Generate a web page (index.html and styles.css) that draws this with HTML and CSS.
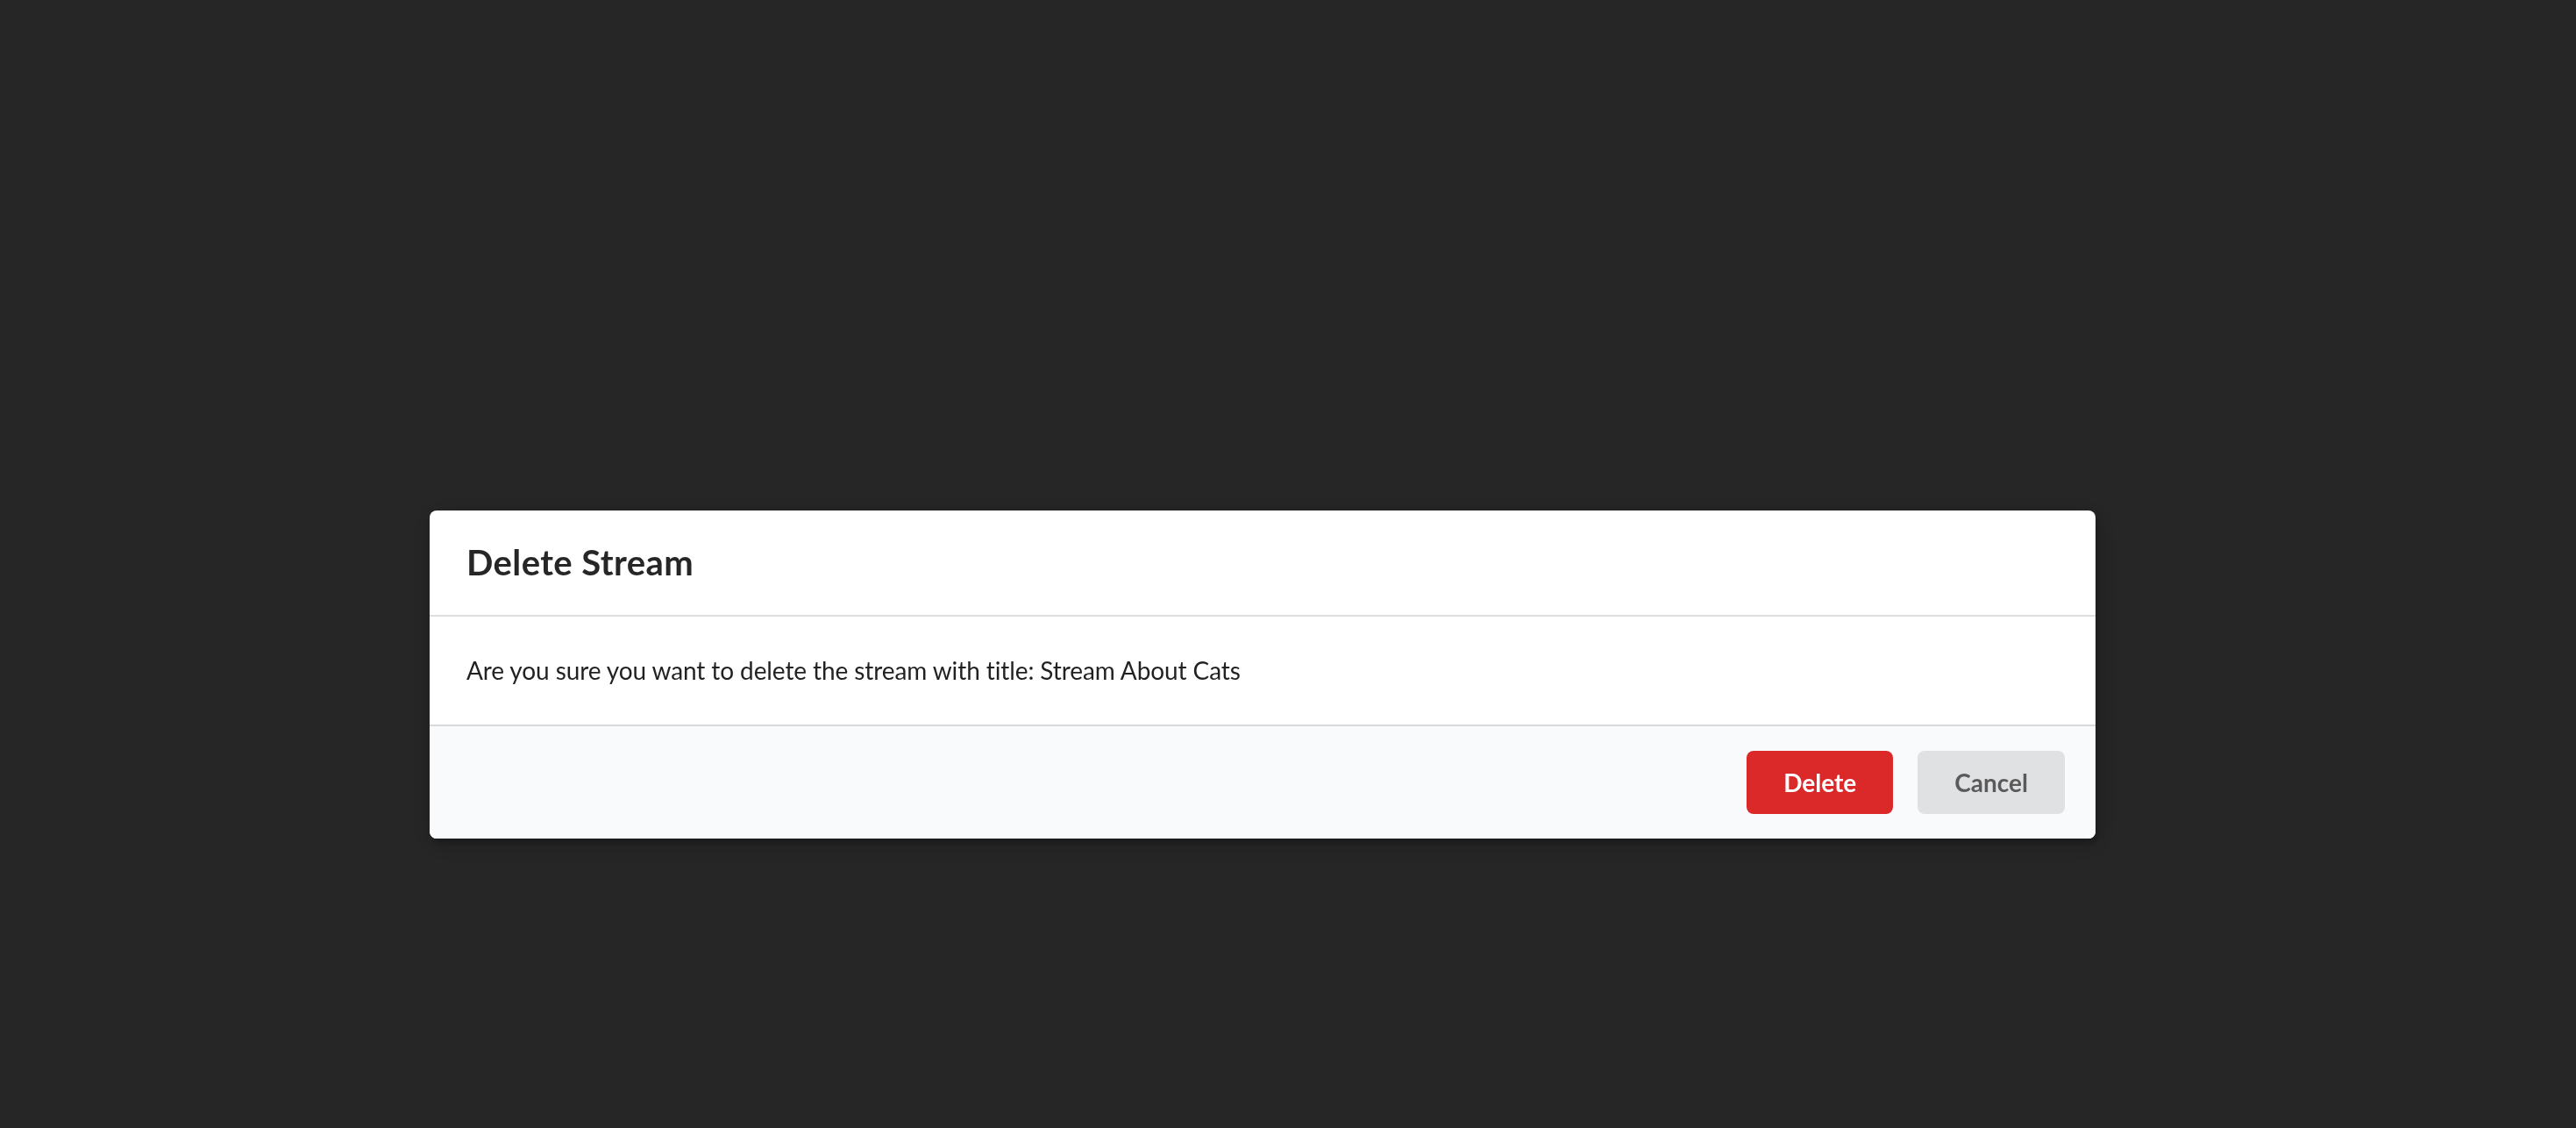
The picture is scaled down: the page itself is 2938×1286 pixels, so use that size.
FILE: index.html
```html
<!DOCTYPE html>
<html lang="en">
<head>
<meta charset="utf-8">
<title>Delete Stream</title>
<link rel="stylesheet" href="styles.css">
</head>
<body>
<div class="dimmer">
  <div class="modal">
    <div class="header">Delete Stream</div>
    <div class="content">Are you sure you want to delete the stream with title: Stream About Cats</div>
    <div class="actions">
      <button class="button negative">Delete</button>
      <button class="button">Cancel</button>
    </div>
  </div>
</div>
</body>
</html>
```
FILE: styles.css
```css
html, body {
  margin: 0;
  padding: 0;
  height: 100%;
  background: #ffffff;
}
body {
  font-family: Lato, "Helvetica Neue", Arial, sans-serif;
  font-size: 28px;
  line-height: 1.4285em;
  color: rgba(0, 0, 0, 0.87);
}
.dimmer {
  position: fixed;
  inset: 0;
  background: rgba(0, 0, 0, 0.85);
  display: flex;
  flex-direction: column;
  align-items: flex-start;
  padding: 582px 0 0 490px;
  box-sizing: border-box;
}
.modal {
  width: 1900px;
  background: #ffffff;
  border-radius: 8px;
  box-shadow: 2px 6px 6px 0 rgba(0, 0, 0, 0.2), 2px 6px 30px 4px rgba(0, 0, 0, 0.2);
  overflow: hidden;
}
.header {
  padding: 35px 42px;
  font-size: 40px;
  line-height: 49px;
  font-weight: 700;
  letter-spacing: 0.4px;
  color: rgba(0, 0, 0, 0.85);
  border-bottom: 2px solid rgba(34, 36, 38, 0.15);
}
.content {
  padding: 42px;
  font-size: 28px;
  line-height: 1.4;
  letter-spacing: -0.1px;
}
.actions {
  background: #F9FAFB;
  border-top: 2px solid rgba(34, 36, 38, 0.15);
  padding: 28px 35px 28px 28px;
  display: flex;
  justify-content: flex-end;
  gap: 28px;
}
.button {
  font-family: Lato, "Helvetica Neue", Arial, sans-serif;
  font-size: 28px;
  line-height: 1em;
  font-weight: 700;
  padding: 22px 42px;
  border: none;
  border-radius: 8px;
  background: #E0E1E2;
  color: rgba(0, 0, 0, 0.6);
  cursor: pointer;
}
.button.negative {
  background: #DB2828;
  color: #ffffff;
}
```
